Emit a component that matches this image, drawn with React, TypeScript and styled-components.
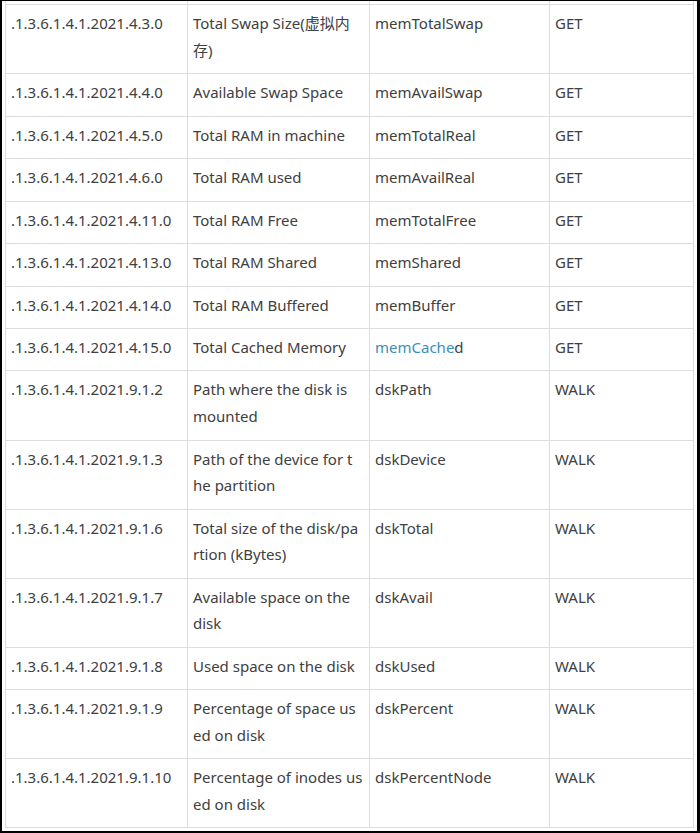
import styled, { createGlobalStyle } from "styled-components";

type Row = {
  oid: string;
  desc: string[];
  name: string;
  link?: string;
  op: string;
};

// description lines are kept as they wrap in the source table
const rows: Row[] = [
  { oid: ".1.3.6.1.4.1.2021.4.3.0", desc: ["Total Swap Size(虚拟内", "存)"], name: "memTotalSwap", op: "GET" },
  { oid: ".1.3.6.1.4.1.2021.4.4.0", desc: ["Available Swap Space"], name: "memAvailSwap", op: "GET" },
  { oid: ".1.3.6.1.4.1.2021.4.5.0", desc: ["Total RAM in machine"], name: "memTotalReal", op: "GET" },
  { oid: ".1.3.6.1.4.1.2021.4.6.0", desc: ["Total RAM used"], name: "memAvailReal", op: "GET" },
  { oid: ".1.3.6.1.4.1.2021.4.11.0", desc: ["Total RAM Free"], name: "memTotalFree", op: "GET" },
  { oid: ".1.3.6.1.4.1.2021.4.13.0", desc: ["Total RAM Shared"], name: "memShared", op: "GET" },
  { oid: ".1.3.6.1.4.1.2021.4.14.0", desc: ["Total RAM Buffered"], name: "memBuffer", op: "GET" },
  { oid: ".1.3.6.1.4.1.2021.4.15.0", desc: ["Total Cached Memory"], name: "d", link: "memCache", op: "GET" },
  { oid: ".1.3.6.1.4.1.2021.9.1.2", desc: ["Path where the disk is", "mounted"], name: "dskPath", op: "WALK" },
  { oid: ".1.3.6.1.4.1.2021.9.1.3", desc: ["Path of the device for t", "he partition"], name: "dskDevice", op: "WALK" },
  { oid: ".1.3.6.1.4.1.2021.9.1.6", desc: ["Total size of the disk/pa", "rtion (kBytes)"], name: "dskTotal", op: "WALK" },
  { oid: ".1.3.6.1.4.1.2021.9.1.7", desc: ["Available space on the", "disk"], name: "dskAvail", op: "WALK" },
  { oid: ".1.3.6.1.4.1.2021.9.1.8", desc: ["Used space on the disk"], name: "dskUsed", op: "WALK" },
  { oid: ".1.3.6.1.4.1.2021.9.1.9", desc: ["Percentage of space us", "ed on disk"], name: "dskPercent", op: "WALK" },
  { oid: ".1.3.6.1.4.1.2021.9.1.10", desc: ["Percentage of inodes us", "ed on disk"], name: "dskPercentNode", op: "WALK" },
];

export default function App() {
  return (
    <>
      <GlobalStyle />
      <Frame>
        <Table>
          <colgroup>
            <col style={{ width: 182 }} />
            <col style={{ width: 182 }} />
            <col style={{ width: 180 }} />
            <col />
          </colgroup>
          <tbody>
            <CutRow>
              <td />
              <td />
              <td />
              <td />
            </CutRow>
            {rows.map((r) => (
              <tr key={r.oid}>
                <Cell>{r.oid}</Cell>
                <Cell>
                  {r.desc.map((line, i) => (
                    <Line key={i}>{line}</Line>
                  ))}
                </Cell>
                <Cell>
                  {r.link && <Link href="#">{r.link}</Link>}
                  {r.name}
                </Cell>
                <Cell>{r.op}</Cell>
              </tr>
            ))}
          </tbody>
        </Table>
      </Frame>
    </>
  );
}

const GlobalStyle = createGlobalStyle`
  html, body {
    margin: 0;
    padding: 0;
    background: #fff;
  }
`;

const Frame = styled.div`
  box-sizing: border-box;
  width: 700px;
  height: 833px;
  overflow: hidden;
  background: #fff;
  border-style: solid;
  border-color: #000;
  border-width: 1px 3px 2px 2px;
  padding: 0 3px;
`;

const Table = styled.table`
  width: 689px;
  table-layout: fixed;
  border-collapse: collapse;
  font-family: "Noto Sans", "Noto Sans CJK SC", sans-serif;
  font-size: 15px;
  color: #404040;
`;

const CutRow = styled.tr`
  td {
    height: 3px;
    padding: 0;
    border: 1px solid #ddd;
    border-top: none;
  }
`;

const Cell = styled.td`
  border: 1px solid #ddd;
  padding: 5px 5px 9.9px;
  line-height: 26.6px;
  vertical-align: top;
  white-space: nowrap;
  overflow: hidden;
`;

const Line = styled.div`
  white-space: nowrap;
`;

const Link = styled.a`
  color: #3a8fb7;
  text-decoration: none;
`;
